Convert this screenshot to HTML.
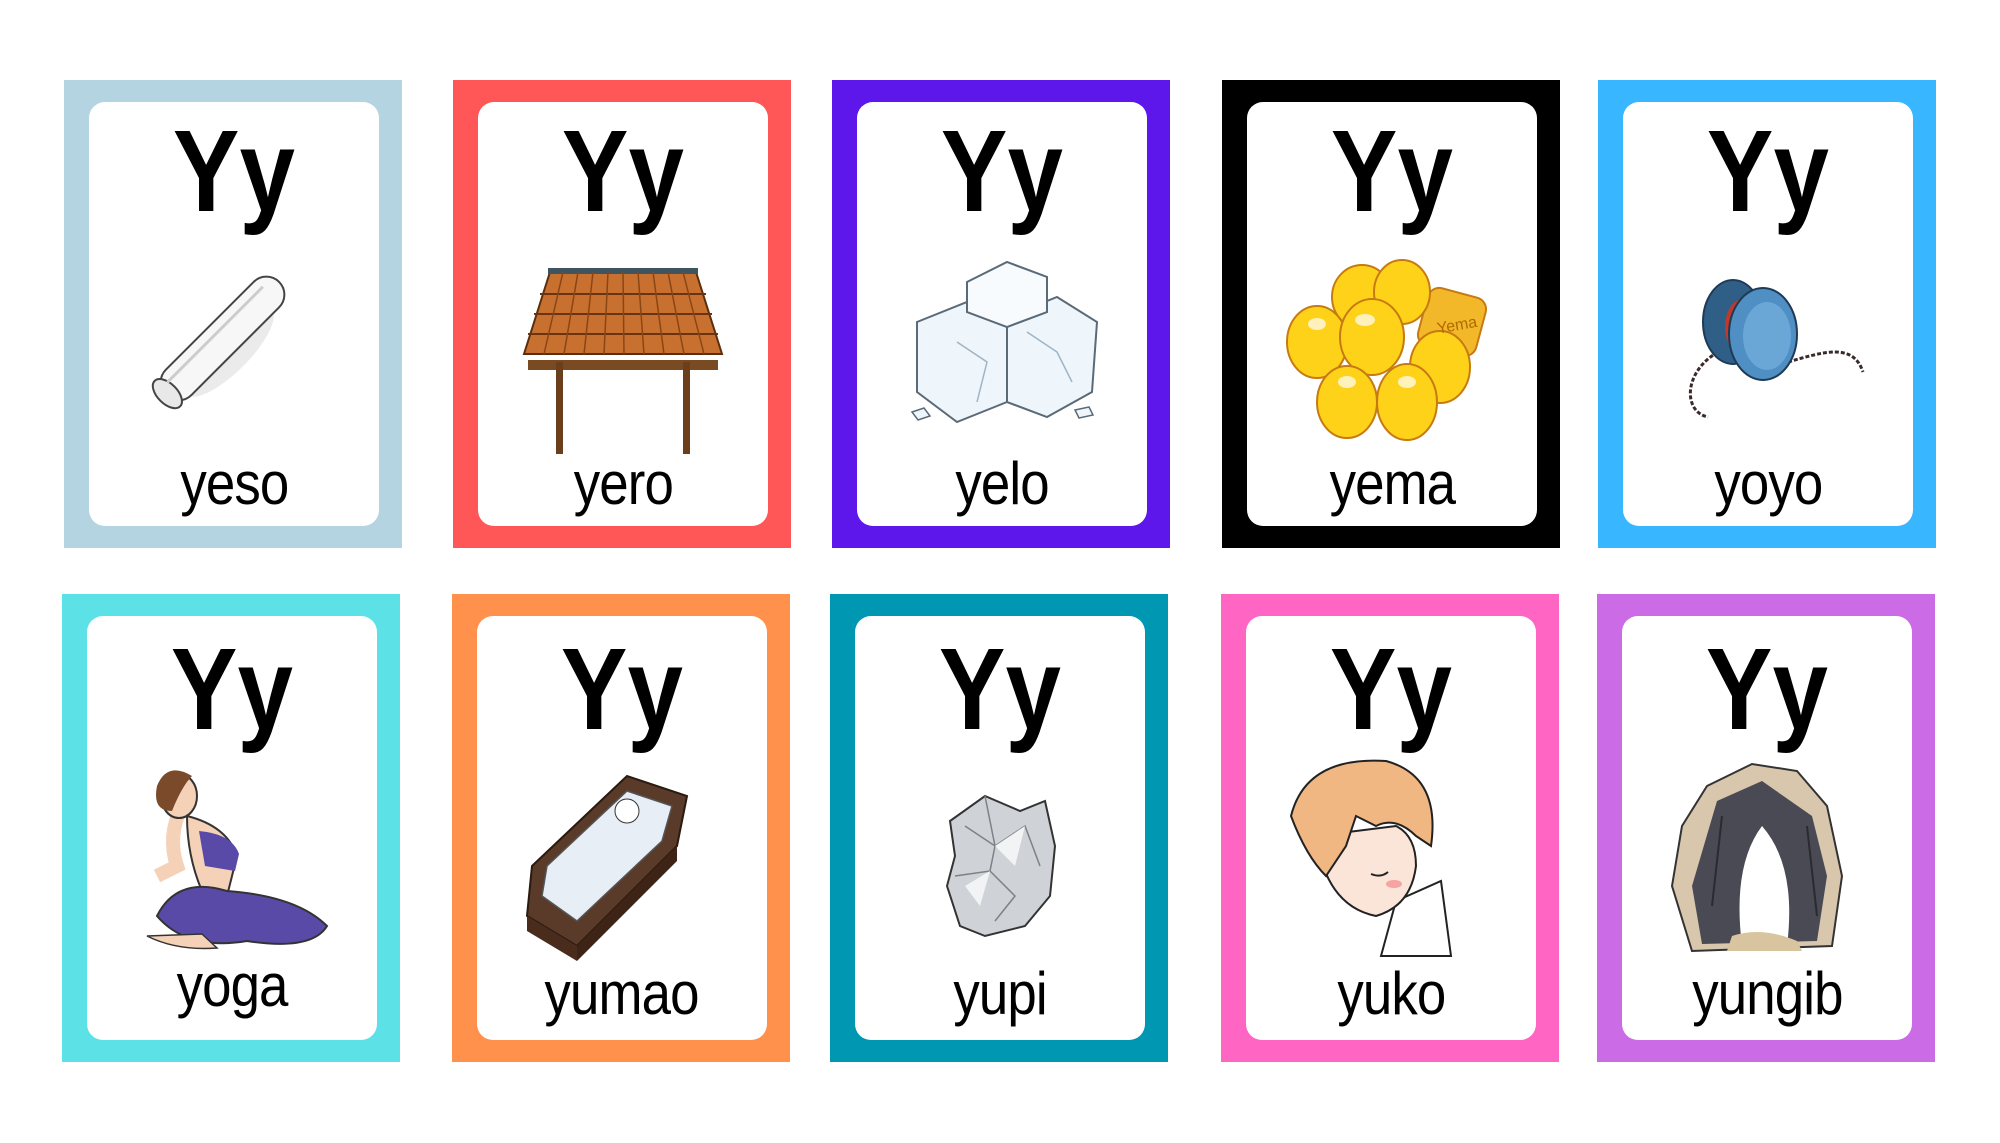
<!DOCTYPE html>
<html><head><meta charset="utf-8"><style>
html,body{margin:0;padding:0;background:#fff;width:2000px;height:1143px;overflow:hidden}
.c{position:absolute;width:338px;height:468px}
.i{position:absolute;left:25px;top:22px;right:23px;bottom:22px;background:#fff;border-radius:16px;overflow:hidden}
.L{position:absolute;left:0;right:0;top:11px;text-align:center;font:bold 116px/1 "Liberation Sans",sans-serif;color:#000}
.L span,.W span{display:inline-block;transform:scaleX(.86)}
.W span{transform:scaleX(.88)}
.W{position:absolute;left:0;right:0;top:352px;text-align:center;font:60px/1 "Liberation Sans",sans-serif;letter-spacing:-1px;color:#000}
.i svg{position:absolute;left:0;top:140px}
.r2 .L{top:15px}
.r2 .W{top:348px}
</style></head><body>

<div class="c" style="left:64px;top:80px;background:#b3d4e0"><div class="i"><div class="L"><span>Yy</span></div>
<svg width="292" height="220" viewBox="0 0 292 220"><ellipse cx="140" cy="110" rx="20" ry="60" transform="rotate(45 140 110)" fill="#ddd" opacity=".6"/><g transform="rotate(45 130 100)"><rect x="112" y="15" width="36" height="160" rx="18" fill="#f7f7f7" stroke="#444" stroke-width="2"/><ellipse cx="130" cy="173" rx="18" ry="10" fill="#e8e8e8" stroke="#444" stroke-width="2"/><line x1="122" y1="30" x2="122" y2="165" stroke="#ccc" stroke-width="3"/></g></svg>
<div class="W"><span>yeso</span></div></div></div>

<div class="c" style="left:453px;top:80px;background:#ff5757"><div class="i"><div class="L"><span>Yy</span></div>
<svg width="292" height="220" viewBox="0 0 292 220"><rect x="50" y="118" width="190" height="10" fill="#7a4a22"/><rect x="78" y="120" width="7" height="92" fill="#6b3f1c"/><rect x="205" y="120" width="7" height="92" fill="#6b3f1c"/><path d="M72 30 L218 30 L244 112 L46 112 Z" fill="#c8702f" stroke="#5a2f10" stroke-width="2"/><rect x="70" y="26" width="150" height="6" fill="#3e5560"/><g stroke="#6b3310" stroke-width="2"><line x1="62" y1="52" x2="228" y2="52"/><line x1="56" y1="72" x2="234" y2="72"/><line x1="50" y1="92" x2="240" y2="92"/></g><g stroke="#8a4515" stroke-width="1.5"><line x1="85" y1="30" x2="66" y2="112"/><line x1="100" y1="30" x2="86" y2="112"/><line x1="115" y1="30" x2="106" y2="112"/><line x1="130" y1="30" x2="126" y2="112"/><line x1="145" y1="30" x2="146" y2="112"/><line x1="160" y1="30" x2="166" y2="112"/><line x1="175" y1="30" x2="186" y2="112"/><line x1="190" y1="30" x2="206" y2="112"/><line x1="205" y1="30" x2="226" y2="112"/></g></svg>
<div class="W"><span>yero</span></div></div></div>

<div class="c" style="left:832px;top:80px;background:#5e17eb"><div class="i"><div class="L"><span>Yy</span></div>
<svg width="292" height="220" viewBox="0 0 292 220"><g fill="#eef6fb" stroke="#5a6a78" stroke-width="2"><path d="M60 80 L110 60 L150 75 L150 160 L100 180 L60 150 Z"/><path d="M150 75 L200 55 L240 80 L235 150 L190 175 L150 160 Z"/><path d="M110 40 L150 20 L190 35 L190 70 L150 85 L110 70 Z" fill="#f7fbfd"/></g><g stroke="#9fb4c4" stroke-width="1.5" fill="none"><path d="M100 100 L130 120 L120 160"/><path d="M170 90 L200 110 L215 140"/></g><path d="M55 170 l12 -4 l6 8 l-12 4z M218 168 l14 -3 l4 8 l-14 3z" fill="#eef6fb" stroke="#5a6a78" stroke-width="1.5"/></svg>
<div class="W"><span>yelo</span></div></div></div>

<div class="c" style="left:1222px;top:80px;background:#000"><div class="i"><div class="L"><span>Yy</span></div>
<svg width="292" height="220" viewBox="0 0 292 220"><g stroke="#c77a10" stroke-width="2" fill="#ffd21a"><rect x="175" y="50" width="60" height="60" rx="12" transform="rotate(15 205 80)" fill="#f2b82a"/><ellipse cx="115" cy="55" rx="30" ry="32"/><ellipse cx="155" cy="50" rx="28" ry="32"/><ellipse cx="70" cy="100" rx="30" ry="36"/><ellipse cx="193" cy="125" rx="30" ry="36"/><ellipse cx="125" cy="95" rx="32" ry="38"/><ellipse cx="100" cy="160" rx="30" ry="36"/><ellipse cx="160" cy="160" rx="30" ry="38"/></g><text x="190" y="90" font-family="Liberation Sans" font-size="16" fill="#b06a00" transform="rotate(-10 200 85)">Yema</text><g fill="#fff" opacity=".7"><ellipse cx="118" cy="78" rx="10" ry="6"/><ellipse cx="70" cy="82" rx="9" ry="6"/><ellipse cx="100" cy="140" rx="9" ry="6"/><ellipse cx="160" cy="140" rx="9" ry="6"/></g></svg>
<div class="W"><span>yema</span></div></div></div>

<div class="c" style="left:1598px;top:80px;background:#38b6ff"><div class="i"><div class="L"><span>Yy</span></div>
<svg width="292" height="220" viewBox="0 0 292 220"><path d="M95 110 C60 130 60 170 85 175 M165 120 C200 110 230 100 240 130" stroke="#3a2a2a" stroke-width="3" fill="none" stroke-dasharray="4 2"/><ellipse cx="110" cy="80" rx="30" ry="42" fill="#2f5e86" stroke="#1e3a55" stroke-width="2"/><ellipse cx="120" cy="85" rx="18" ry="28" fill="#c0392b"/><ellipse cx="140" cy="92" rx="34" ry="46" fill="#4f8fc4" stroke="#1e3a55" stroke-width="2"/><ellipse cx="144" cy="94" rx="24" ry="34" fill="#6aa6d6"/></svg>
<div class="W"><span>yoyo</span></div></div></div>

<div class="c r2" style="left:62px;top:594px;background:#5ce1e6"><div class="i"><div class="L"><span>Yy</span></div>
<svg width="292" height="220" viewBox="0 0 292 220"><path d="M95 50 Q80 80 90 110 L70 120" stroke="#f5d1b8" stroke-width="14" fill="none"/><ellipse cx="92" cy="40" rx="18" ry="22" fill="#f5d1b8" stroke="#333" stroke-width="2"/><path d="M70 30 Q80 5 105 20 Q95 30 85 55 Q65 55 70 30 Z" fill="#7a4a2a"/><path d="M100 60 Q140 70 150 100 L140 140 L115 135 Q100 100 100 60 Z" fill="#f5d1b8" stroke="#333" stroke-width="2"/><path d="M112 75 Q145 78 152 98 L148 115 L118 110 Z" fill="#5a4aa8"/><path d="M70 160 Q90 120 140 135 Q210 140 240 170 Q225 195 160 185 Q100 195 70 160 Z" fill="#5a4aa8" stroke="#333" stroke-width="2"/><path d="M60 180 Q90 195 130 192 L115 178 Z" fill="#f5d1b8" stroke="#333" stroke-width="1.5"/></svg>
<div class="W" style="top:340px"><span>yoga</span></div></div></div>

<div class="c r2" style="left:452px;top:594px;background:#ff914d"><div class="i"><div class="L"><span>Yy</span></div>
<svg width="292" height="220" viewBox="0 0 292 220"><path d="M55 110 L150 20 L210 40 L200 90 L100 190 L50 160 Z" fill="#5a3a28" stroke="#2a1a10" stroke-width="2"/><path d="M70 110 L150 35 L195 50 L185 85 L100 165 L65 140 Z" fill="#e8eef5" stroke="#555" stroke-width="1.5"/><circle cx="150" cy="55" r="12" fill="#fff" stroke="#333"/><path d="M50 160 L100 190 L100 205 L50 175 Z" fill="#4a2c1c"/><path d="M100 190 L200 90 L200 105 L100 205 Z" fill="#3e2416"/></svg>
<div class="W"><span>yumao</span></div></div></div>

<div class="c r2" style="left:830px;top:594px;background:#0097b2"><div class="i"><div class="L"><span>Yy</span></div>
<svg width="292" height="220" viewBox="0 0 292 220"><path d="M95 65 L130 40 L165 55 L190 45 L200 90 L195 140 L170 170 L130 180 L105 170 L92 130 L100 100 Z" fill="#cfd2d6" stroke="#333" stroke-width="2"/><g stroke="#7d8186" stroke-width="1.5" fill="none"><path d="M110 70 L140 90 L170 70 L185 110"/><path d="M100 120 L135 115 L160 140 L140 165"/><path d="M130 40 L140 90 L135 115"/></g><g fill="#f2f3f5"><path d="M140 90 L170 70 L160 110 Z"/><path d="M110 130 L135 115 L125 150 Z"/></g></svg>
<div class="W"><span>yupi</span></div></div></div>

<div class="c r2" style="left:1221px;top:594px;background:#ff66c4"><div class="i"><div class="L"><span>Yy</span></div>
<svg width="292" height="220" viewBox="0 0 292 220"><path d="M150 145 L195 125 L205 200 L135 200 Z" fill="#fff" stroke="#222" stroke-width="2"/><path d="M70 80 Q80 150 130 160 Q165 150 170 110 Q170 80 150 70 Z" fill="#fbe4d8" stroke="#222" stroke-width="2"/><path d="M45 60 Q60 0 140 5 Q195 20 185 90 L170 80 Q150 60 130 70 L110 60 L100 90 L80 120 Q60 100 45 60 Z" fill="#f0b783" stroke="#222" stroke-width="2"/><path d="M125 118 Q135 122 142 116" stroke="#222" stroke-width="2" fill="none"/><ellipse cx="148" cy="128" rx="8" ry="4" fill="#f5a3a3"/></svg>
<div class="W"><span>yuko</span></div></div></div>

<div class="c r2" style="left:1597px;top:594px;background:#cb6ce6"><div class="i"><div class="L"><span>Yy</span></div>
<svg width="292" height="220" viewBox="0 0 292 220"><path d="M85 30 L130 8 L175 15 L205 50 L220 120 L210 190 L70 195 L50 130 L60 70 Z" fill="#d9c7ad" stroke="#333" stroke-width="2"/><path d="M95 45 L140 25 L190 60 L205 120 L195 185 L80 188 L70 130 Z" fill="#4a4a55"/><path d="M120 190 Q110 110 140 70 Q175 110 165 190 Z" fill="#fff"/><path d="M110 180 Q140 170 175 185 L180 195 L105 195 Z" fill="#d8c5a0"/><g stroke="#2a2a30" stroke-width="2" fill="none"><path d="M100 60 L90 150"/><path d="M185 70 L195 160"/></g></svg>
<div class="W"><span>yungib</span></div></div></div>

</body></html>
